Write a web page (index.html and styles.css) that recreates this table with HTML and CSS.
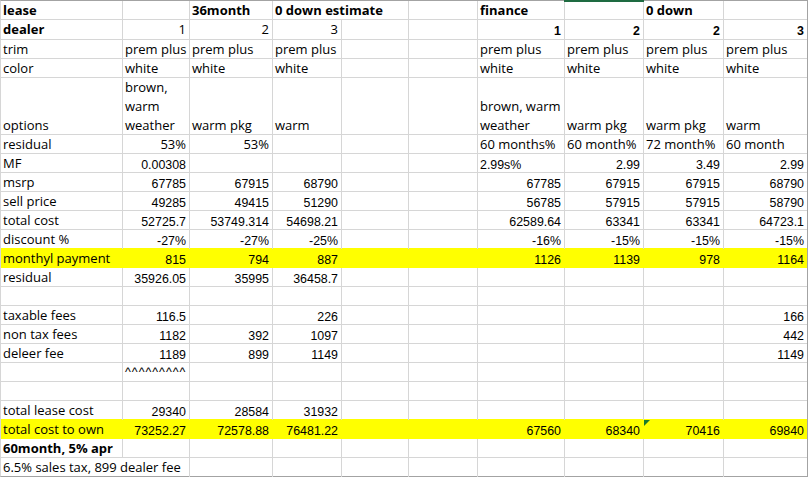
FILE: index.html
```html
<!DOCTYPE html>
<html>
<head>
<meta charset="utf-8">
<link rel="stylesheet" href="styles.css">
</head>
<body>
<div class="sheet">
  <div class="row h19">
    <div class="c b">lease</div><div class="c"></div><div class="c b">36month</div><div class="c b nob">0 down estimate</div><div class="c"></div><div class="c"></div><div class="c b">finance</div><div class="c sel"></div><div class="c b">0 down</div><div class="c"></div>
  </div>
  <div class="row h20">
    <div class="c b">dealer</div><div class="c r">1</div><div class="c r">2</div><div class="c r">3</div><div class="c"></div><div class="c"></div><div class="c n r b">1</div><div class="c n r b">2</div><div class="c n r b">2</div><div class="c n r b">3</div>
  </div>
  <div class="row">
    <div class="c">trim</div><div class="c">prem plus</div><div class="c">prem plus</div><div class="c">prem plus</div><div class="c"></div><div class="c"></div><div class="c">prem plus</div><div class="c">prem plus</div><div class="c">prem plus</div><div class="c">prem plus</div>
  </div>
  <div class="row">
    <div class="c">color</div><div class="c">white</div><div class="c">white</div><div class="c">white</div><div class="c"></div><div class="c"></div><div class="c">white</div><div class="c">white</div><div class="c">white</div><div class="c">white</div>
  </div>
  <div class="row h57">
    <div class="c">options</div><div class="c"><div>brown,<br>warm<br>weather</div></div><div class="c">warm pkg</div><div class="c">warm</div><div class="c"></div><div class="c"></div><div class="c"><div>brown, warm<br>weather</div></div><div class="c">warm pkg</div><div class="c">warm pkg</div><div class="c">warm</div>
  </div>
  <div class="row">
    <div class="c">residual</div><div class="c r">53%</div><div class="c r">53%</div><div class="c"></div><div class="c"></div><div class="c"></div><div class="c">60 months%</div><div class="c">60 month%</div><div class="c">72 month%</div><div class="c">60 month</div>
  </div>
  <div class="row">
    <div class="c">MF</div><div class="c n r">0.00308</div><div class="c"></div><div class="c"></div><div class="c"></div><div class="c"></div><div class="c n">2.99s%</div><div class="c n r">2.99</div><div class="c n r">3.49</div><div class="c n r">2.99</div>
  </div>
  <div class="row">
    <div class="c">msrp</div><div class="c n r">67785</div><div class="c n r">67915</div><div class="c n r">68790</div><div class="c"></div><div class="c"></div><div class="c n r">67785</div><div class="c n r">67915</div><div class="c n r">67915</div><div class="c n r">68790</div>
  </div>
  <div class="row">
    <div class="c">sell price</div><div class="c n r">49285</div><div class="c n r">49415</div><div class="c n r">51290</div><div class="c"></div><div class="c"></div><div class="c n r">56785</div><div class="c n r">57915</div><div class="c n r">57915</div><div class="c n r">58790</div>
  </div>
  <div class="row">
    <div class="c">total cost</div><div class="c n r">52725.7</div><div class="c n r">53749.314</div><div class="c n r">54698.21</div><div class="c"></div><div class="c"></div><div class="c n r">62589.64</div><div class="c n r">63341</div><div class="c n r">63341</div><div class="c n r">64723.1</div>
  </div>
  <div class="row">
    <div class="c">discount %</div><div class="c n r">-27%</div><div class="c n r">-27%</div><div class="c n r">-25%</div><div class="c"></div><div class="c"></div><div class="c n r">-16%</div><div class="c n r">-15%</div><div class="c n r">-15%</div><div class="c n r">-15%</div>
  </div>
  <div class="row hl">
    <div class="c">monthyl payment</div><div class="c n r">815</div><div class="c n r">794</div><div class="c n r">887</div><div class="c"></div><div class="c"></div><div class="c n r">1126</div><div class="c n r">1139</div><div class="c n r">978</div><div class="c n r">1164</div>
  </div>
  <div class="row">
    <div class="c">residual</div><div class="c n r">35926.05</div><div class="c n r">35995</div><div class="c n r">36458.7</div><div class="c"></div><div class="c"></div><div class="c"></div><div class="c"></div><div class="c"></div><div class="c"></div>
  </div>
  <div class="row">
    <div class="c"></div><div class="c"></div><div class="c"></div><div class="c"></div><div class="c"></div><div class="c"></div><div class="c"></div><div class="c"></div><div class="c"></div><div class="c"></div>
  </div>
  <div class="row">
    <div class="c">taxable fees</div><div class="c n r">116.5</div><div class="c"></div><div class="c n r">226</div><div class="c"></div><div class="c"></div><div class="c"></div><div class="c"></div><div class="c"></div><div class="c n r">166</div>
  </div>
  <div class="row">
    <div class="c">non tax fees</div><div class="c n r">1182</div><div class="c n r">392</div><div class="c n r">1097</div><div class="c"></div><div class="c"></div><div class="c"></div><div class="c"></div><div class="c"></div><div class="c n r">442</div>
  </div>
  <div class="row">
    <div class="c">deleer fee</div><div class="c n r">1189</div><div class="c n r">899</div><div class="c n r">1149</div><div class="c"></div><div class="c"></div><div class="c"></div><div class="c"></div><div class="c"></div><div class="c n r">1149</div>
  </div>
  <div class="row">
    <div class="c"></div><div class="c n caret">^^^^^^^^^</div><div class="c"></div><div class="c"></div><div class="c"></div><div class="c"></div><div class="c"></div><div class="c"></div><div class="c"></div><div class="c"></div>
  </div>
  <div class="row">
    <div class="c"></div><div class="c"></div><div class="c"></div><div class="c"></div><div class="c"></div><div class="c"></div><div class="c"></div><div class="c"></div><div class="c"></div><div class="c"></div>
  </div>
  <div class="row">
    <div class="c">total lease cost</div><div class="c n r">29340</div><div class="c n r">28584</div><div class="c n r">31932</div><div class="c"></div><div class="c"></div><div class="c"></div><div class="c"></div><div class="c"></div><div class="c"></div>
  </div>
  <div class="row hl">
    <div class="c">total cost to own</div><div class="c n r">73252.27</div><div class="c n r">72578.88</div><div class="c n r">76481.22</div><div class="c"></div><div class="c"></div><div class="c n r">67560</div><div class="c n r">68340</div><div class="c n r tri">70416</div><div class="c n r">69840</div>
  </div>
  <div class="row">
    <div class="c b">60month, 5% apr</div><div class="c"></div><div class="c"></div><div class="c"></div><div class="c"></div><div class="c"></div><div class="c"></div><div class="c"></div><div class="c"></div><div class="c"></div>
  </div>
  <div class="row last">
    <div class="c nob">6.5% sales tax, 899 dealer fee</div><div class="c"></div><div class="c"></div><div class="c"></div><div class="c"></div><div class="c"></div><div class="c"></div><div class="c"></div><div class="c"></div><div class="c"></div>
  </div>
</div>
</body>
</html>
```
FILE: styles.css
```css
html, body {
  margin: 0;
  padding: 0;
  background: #ffffff;
}

.sheet {
  width: 806px;
  border-top: 1px solid #a3a3a3;
  border-bottom: 1px solid #a3a3a3;
  border-right: 1px solid #a3a3a3;
  border-left: 1px solid #d6d6d6;
  font-family: "Open Sans", "Liberation Sans", sans-serif;
  font-size: 13px;
  color: #000;
}

.row {
  display: grid;
  grid-template-columns: 122px 67px 83px 69px 67px 69px 87px 79px 80px 83px;
  height: 19px;
  box-sizing: border-box;
  border-bottom: 1px solid #d6d6d6;
}

.row.h20 { height: 20px; }
.row.h57 { height: 57px; }
.row.last { height: 18px; border-bottom: none; }

.row.hl {
  background: #ffff00;
  border-bottom-color: #ffff00;
  box-shadow: 0 -1px 0 #ffff00;
}

.c {
  box-sizing: border-box;
  border-right: 1px solid #d6d6d6;
  padding: 0 3px 0 2px;
  display: flex;
  align-items: flex-end;
  justify-content: flex-start;
  white-space: nowrap;
  line-height: 19px;
  min-width: 0;
}

.c:last-child { border-right: none; }
.hl .c { border-right-color: #ffff00; }
.hl .c:last-child { border-right: none; }

.c.nob { border-right-color: transparent; }

.c.r { justify-content: flex-end; }
.c.b { font-weight: 700; }

.c.n {
  font-family: "Liberation Sans", Arial, sans-serif;
  font-size: 12.4px;
  line-height: 16px;
}

.c.caret {
  letter-spacing: 1px;
  font-size: 12.4px;
  line-height: 17px;
}

.sel { position: relative; }
.sel::before {
  content: "";
  position: absolute;
  left: -1px;
  top: -1px;
  width: 80px;
  height: 2px;
  background: #1e6b41;
}

.tri { position: relative; }
.tri::before {
  content: "";
  position: absolute;
  left: 0;
  top: 0;
  width: 0;
  height: 0;
  border-top: 6px solid #1a7a2e;
  border-right: 6px solid transparent;
}
```
